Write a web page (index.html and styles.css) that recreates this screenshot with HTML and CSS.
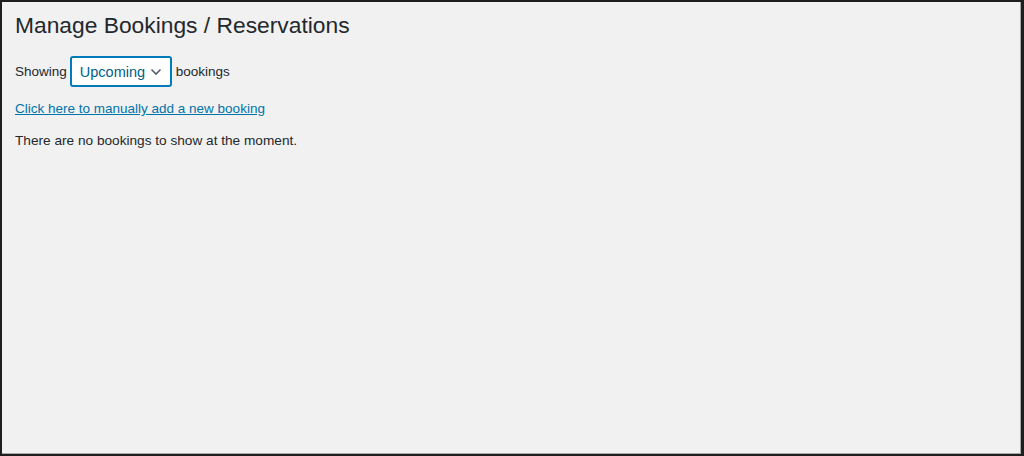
FILE: index.html
```html
<!DOCTYPE html>
<html>
<head>
<meta charset="utf-8">
<link rel="stylesheet" href="styles.css">
</head>
<body>
<div class="frame">
  <div class="wrap">
    <h1 class="title">Manage Bookings / Reservations</h1>
    <div class="filter">
      <span>Showing</span>
      <div class="select">
        <span>Upcoming</span>
        <svg class="chev" width="12" height="8" viewBox="0 0 12 8"><path d="M1.5 1.5 L6 6 L10.5 1.5" fill="none" stroke="#555d66" stroke-width="1.6"/></svg>
      </div>
      <span>bookings</span>
    </div>
    <p class="add"><a href="#">Click here to manually add a new booking</a></p>
    <p class="empty">There are no bookings to show at the moment.</p>
  </div>
</div>
</body>
</html>
```
FILE: styles.css
```css
html, body {
  margin: 0;
  padding: 0;
  height: 100%;
}
body {
  font-family: "Liberation Sans", Arial, sans-serif;
  color: #23282d;
  background: #222;
}
.frame {
  box-sizing: border-box;
  width: 1024px;
  height: 456px;
  border-top: 2px solid #1e1e1e;
  border-left: 2px solid #1e1e1e;
  border-right: 3px solid #1e1e1e;
  border-bottom: 2px solid #1e1e1e;
  background: #f1f1f1;
  box-shadow: inset -1px -1px 0 #a9a9a9;
}
.wrap {
  padding: 9px 13px;
}
.title {
  font-size: 22.8px;
  font-weight: 400;
  margin: 0;
  line-height: 29px;
  color: #23282d;
}
.filter {
  display: flex;
  align-items: center;
  gap: 3px;
  margin-top: 16px;
  font-size: 13.5px;
}
.select {
  box-sizing: border-box;
  width: 102px;
  height: 31px;
  margin-right: 1px;
  border: 2px solid #007cba;
  border-radius: 3px;
  background: #fff;
  display: flex;
  align-items: center;
  justify-content: space-between;
  padding: 0 8px 0 8px;
  color: #016087;
  font-size: 14.5px;
}
.chev {
  display: block;
}
.add {
  margin: 13px 0 0;
  font-size: 13.5px;
  line-height: 18px;
}
.add a {
  color: #0073aa;
  text-decoration: underline;
}
.empty {
  margin: 14px 0 0;
  font-size: 13.65px;
  line-height: 18px;
}
```
